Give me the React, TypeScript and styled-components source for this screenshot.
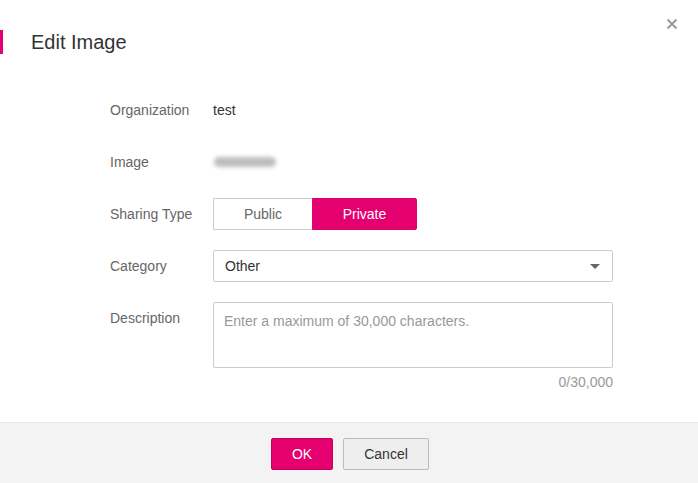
import React from "react";
import styled, { createGlobalStyle } from "styled-components";

const PINK = "#e4006e";

const Global = createGlobalStyle`
  html, body { margin: 0; padding: 0; background: #fff; }
  body { font-family: "Liberation Sans", Arial, sans-serif; font-size: 14px; color: #333; }
  * { box-sizing: border-box; }
`;

const Dialog = styled.div`
  position: relative;
  width: 698px;
  height: 483px;
  display: flex;
  flex-direction: column;
  background: #fff;
`;

const Header = styled.div`
  padding-top: 30px;
  height: 94px;
`;

const Title = styled.h2`
  margin: 0;
  border-left: 3px solid ${PINK};
  padding-left: 28px;
  height: 24px;
  line-height: 24px;
  font-size: 20px;
  font-weight: normal;
  color: #333;
`;

const Close = styled.button`
  position: absolute;
  top: 18px;
  right: 20px;
  width: 12px;
  height: 12px;
  padding: 0;
  border: 0;
  background: none;
  display: flex;
  cursor: pointer;
`;

const Form = styled.div`
  flex: 1;
  display: flex;
  flex-direction: column;
  gap: 20px;
  padding-left: 110px;
`;

const Row = styled.div`
  display: grid;
  grid-template-columns: 103px 400px;
  align-items: start;
`;

const Label = styled.div`
  line-height: 32px;
  color: #666;
`;

const Value = styled.div`
  line-height: 32px;
  color: #333;
`;

const Blurred = styled.div`
  margin-top: 11px;
  width: 62px;
  height: 10px;
  margin-left: 1px;
  border-radius: 5px;
  background: #bdbdbd;
  filter: blur(2px);
`;

const Toggle = styled.div`
  display: flex;
`;

const ToggleBtn = styled.div<{ $active?: boolean; $w: number }>`
  width: ${(p) => p.$w}px;
  height: 32px;
  line-height: 30px;
  text-align: center;
  border: 1px solid ${(p) => (p.$active ? PINK : "#ccc")};
  background: ${(p) => (p.$active ? PINK : "#fff")};
  color: ${(p) => (p.$active ? "#fff" : "#666")};
  border-radius: ${(p) => (p.$active ? "0 2px 2px 0" : "2px 0 0 2px")};
  ${(p) => (p.$active ? "" : "border-right: 0;")}
`;

const Select = styled.div`
  height: 32px;
  border: 1px solid #ccc;
  border-radius: 2px;
  display: flex;
  align-items: center;
  justify-content: space-between;
  padding: 0 12px 0 11px;
  color: #333;
`;

const Arrow = styled.span`
  width: 0;
  height: 0;
  border-left: 5px solid transparent;
  border-right: 5px solid transparent;
  border-top: 5px solid #666;
`;

const Field = styled.div`
  display: flex;
  flex-direction: column;
`;

const TextArea = styled.div`
  height: 66px;
  border: 1px solid #ccc;
  border-radius: 2px;
  padding: 8px 10px;
  line-height: 20px;
  color: #999;
`;

const Counter = styled.div`
  margin-top: 4px;
  line-height: 20px;
  text-align: right;
  color: #999;
`;

const Footer = styled.div`
  height: 61px;
  border-top: 1px solid #e6e6e6;
  background: #f3f3f3;
  display: flex;
  justify-content: center;
  align-items: flex-start;
  gap: 10px;
  padding-top: 15px;
  padding-left: 2px;
`;

const Button = styled.button<{ $primary?: boolean; $w: number }>`
  width: ${(p) => p.$w}px;
  height: 32px;
  border-radius: 2px;
  font-family: "Liberation Sans", Arial, sans-serif;
  font-size: 14px;
  padding: 0;
  border: 1px solid ${(p) => (p.$primary ? "#c4005e" : "#bbb")};
  background: ${(p) => (p.$primary ? PINK : "#eee")};
  color: ${(p) => (p.$primary ? "#fff" : "#333")};
`;

export default function App() {
  return (
    <>
      <Global />
      <Dialog>
        <Header>
          <Title>Edit Image</Title>
        </Header>
        <Close aria-label="close">
          <svg width="12" height="12" viewBox="0 0 12 12">
            <path d="M1.5 1.5L10.5 10.5M10.5 1.5L1.5 10.5" stroke="#999" strokeWidth="2" />
          </svg>
        </Close>
        <Form>
          <Row>
            <Label>Organization</Label>
            <Value>test</Value>
          </Row>
          <Row>
            <Label>Image</Label>
            <Value>
              <Blurred />
            </Value>
          </Row>
          <Row>
            <Label>Sharing Type</Label>
            <Toggle>
              <ToggleBtn $w={99}>Public</ToggleBtn>
              <ToggleBtn $w={105} $active>
                Private
              </ToggleBtn>
            </Toggle>
          </Row>
          <Row>
            <Label>Category</Label>
            <Select>
              <span>Other</span>
              <Arrow />
            </Select>
          </Row>
          <Row>
            <Label>Description</Label>
            <Field>
              <TextArea>Enter a maximum of 30,000 characters.</TextArea>
              <Counter>0/30,000</Counter>
            </Field>
          </Row>
        </Form>
        <Footer>
          <Button $primary $w={62}>OK</Button>
          <Button $w={86}>Cancel</Button>
        </Footer>
      </Dialog>
    </>
  );
}
